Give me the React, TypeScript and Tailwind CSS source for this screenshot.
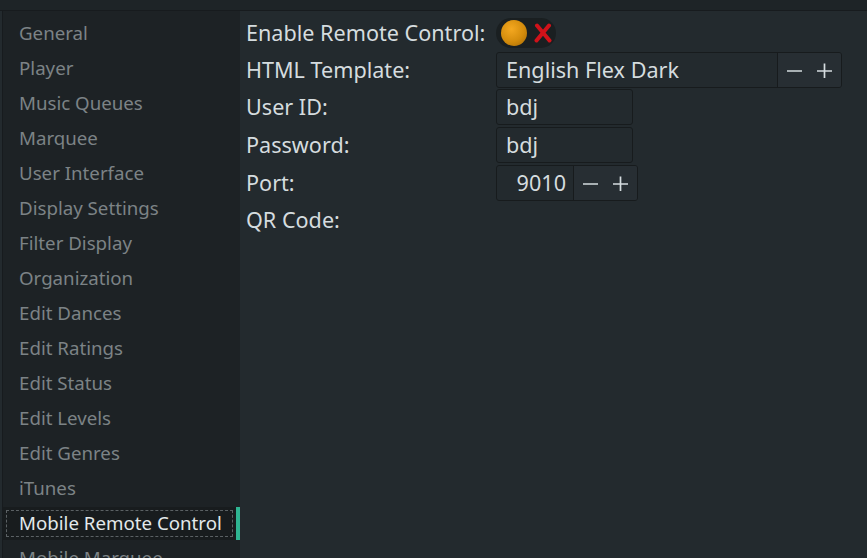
import React from "react";

const items = [
  "General",
  "Player",
  "Music Queues",
  "Marquee",
  "User Interface",
  "Display Settings",
  "Filter Display",
  "Organization",
  "Edit Dances",
  "Edit Ratings",
  "Edit Status",
  "Edit Levels",
  "Edit Genres",
  "iTunes",
  "Mobile Remote Control",
  "Mobile Marquee",
];

function Minus() {
  return (
    <svg width="15" height="15" viewBox="0 0 15 15">
      <path d="M0 8H15" stroke="#d5dcdf" strokeWidth="1.7" />
    </svg>
  );
}
function Plus() {
  return (
    <svg width="15" height="15" viewBox="0 0 15 15">
      <path d="M0 8H15M7.5 0.5V15.5" stroke="#d5dcdf" strokeWidth="1.7" />
    </svg>
  );
}

function Spin() {
  return (
    <div className="w-[64px] bg-[#272e33] border-l border-[#171b1d] flex items-center justify-between px-[9px]">
      <Minus />
      <Plus />
    </div>
  );
}

export default function App() {
  return (
    <div
      className="w-[867px] h-[558px] overflow-hidden bg-[#232a2e] flex flex-col"
      style={{ fontFamily: '"Noto Sans", "DejaVu Sans", sans-serif' }}
    >
      <div className="h-[11px] shrink-0 bg-[#1e2427] border-b border-[#171b1e]" />
      <div className="flex flex-1 min-h-0">
        <div className="ml-[2px] w-[238px] shrink-0 bg-[#1d2225] border-l border-[#171b1e] flex flex-col pt-[5px] overflow-hidden text-[18.7px]">
          {items.map((it) => {
            const sel = it === "Mobile Remote Control";
            return (
              <div key={it} className="h-[35px] shrink-0 flex items-stretch">
                {sel ? (
                  <div className="flex w-full py-[1px]">
                    <div className="flex-1 bg-[#181c1e] p-[3px]">
                      <div className="h-full border border-dashed border-[#5b6164] flex items-center pl-[12px] text-[#e3e9eb] leading-none">
                        {it}
                      </div>
                    </div>
                    <div className="w-[4px] bg-[#2fb592]" />
                  </div>
                ) : (
                  <div className="flex items-center pl-[16px] text-[#7c8386] leading-none whitespace-nowrap">
                    {it}
                  </div>
                )}
              </div>
            );
          })}
        </div>
        <div className="flex-1 bg-[#232a2e] pl-[6px] pt-[4px] text-[#d5dcdf] leading-none text-[21.6px]">
          <div className="flex items-center h-[36px]">
            <div className="w-[250px] whitespace-nowrap">Enable Remote Control:</div>
            <div className="w-[60px] h-[30px] rounded-full bg-[#1a1f21] flex items-center pl-[5px] gap-[7px]">
              <div
                className="w-[26px] h-[26px] rounded-full"
                style={{
                  background:
                    "radial-gradient(circle at 40% 35%, #f4a820 0%, #d48c0c 55%, #a36705 100%)",
                }}
              />
              <svg width="18" height="20" viewBox="0 0 18 20">
                <path
                  d="M3 2.5 L15.5 17.5 M15 2.5 L2.5 17.5"
                  stroke="#d0121a"
                  strokeWidth="4"
                  strokeLinecap="round"
                />
              </svg>
            </div>
          </div>
          <div className="flex items-center h-[36px] mt-[1px]">
            <div className="w-[250px]">HTML Template:</div>
            <div className="flex h-[36px] border border-[#171b1d] rounded-[3px] overflow-hidden">
              <div className="w-[280px] flex items-center pl-[9px] whitespace-nowrap">English Flex Dark</div>
              <Spin />
            </div>
          </div>
          <div className="flex items-center h-[36px] mt-[1px]">
            <div className="w-[250px]">User ID:</div>
            <div className="w-[137px] h-[36px] border border-[#171b1d] rounded-[3px] flex items-center pl-[9px]">
              bdj
            </div>
          </div>
          <div className="flex items-center h-[36px] mt-[2px]">
            <div className="w-[250px]">Password:</div>
            <div className="w-[137px] h-[36px] border border-[#171b1d] rounded-[3px] flex items-center pl-[9px]">
              bdj
            </div>
          </div>
          <div className="flex items-center h-[36px] mt-[2px]">
            <div className="w-[250px]">Port:</div>
            <div className="flex h-[36px] border border-[#171b1d] rounded-[3px] overflow-hidden">
              <div className="w-[76px] flex items-center justify-end pr-[7px]">9010</div>
              <Spin />
            </div>
          </div>
          <div className="flex items-center h-[36px] mt-[1px]">
            <div className="w-[250px]">QR Code:</div>
          </div>
        </div>
      </div>
    </div>
  );
}
